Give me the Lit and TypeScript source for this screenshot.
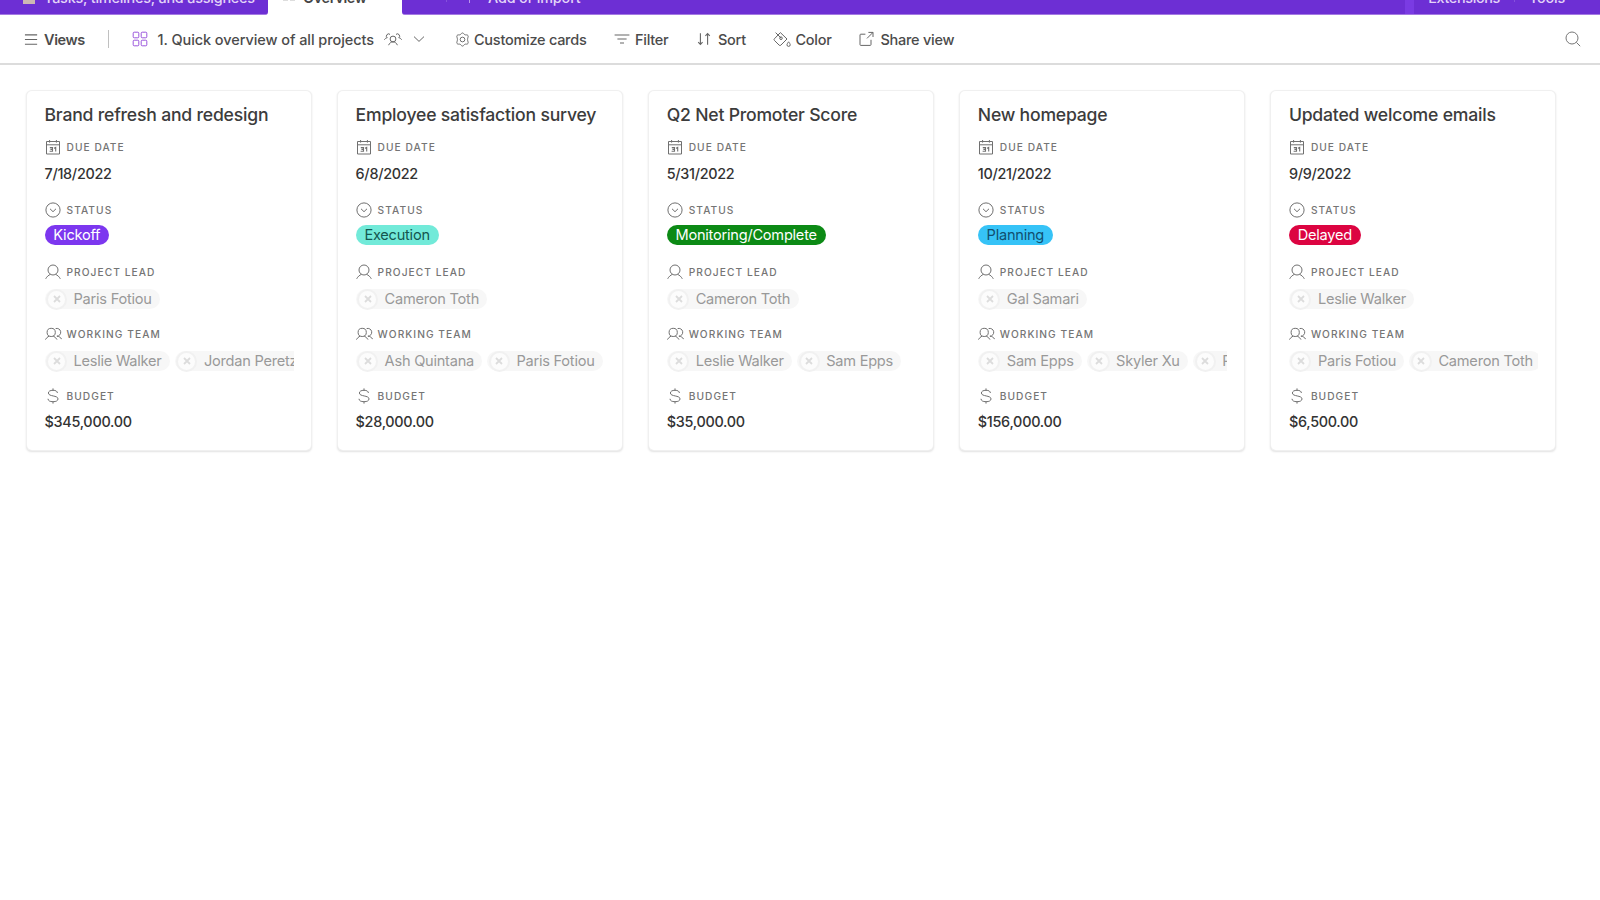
import { LitElement, html, css, svg, nothing } from "lit";
import { customElement, property } from "lit/decorators.js";

const glyphs: Record<string, unknown> = {
  menu: svg`<path d="M1 3H14M1 8H14M1 13H14" stroke-width="1.2"/>`,
  grid: svg`<rect x="1.2" y="1.2" width="5.6" height="5.6" rx="1"/><rect x="9.2" y="1.2" width="5.6" height="5.6" rx="1"/><rect x="1.2" y="9.2" width="5.6" height="5.6" rx="1"/><rect x="9.2" y="9.2" width="5.6" height="5.6" rx="1"/>`,
  people: svg`<circle cx="9" cy="8" r="2.9"/><path d="M4.6 14.2C5.5 12 7 10.9 9 10.9S12.5 12 13.4 14.2M6 3.4A2.2 2.2 0 1 0 3.2 6.8C2 6.9 1.1 7.5.4 8.7M12 3.4A2.2 2.2 0 1 1 14.8 6.8C16 6.9 16.9 7.5 17.6 8.7"/>`,
  chevron: svg`<path d="M3 5.6L8 10.4L13 5.6"/>`,
  gear: svg`<path d="M8 1C9.3 1 9.6 2.6 10.6 3C11.6 3.4 12.9 2.5 13.8 3.7C14.6 4.9 13.4 5.9 13.4 8S14.6 11.1 13.8 12.3C12.9 13.5 11.6 12.6 10.6 13S9.3 15 8 15S6.4 13.4 5.4 13S3.1 13.5 2.2 12.3C1.4 11.1 2.6 10.1 2.6 8S1.4 4.9 2.2 3.7C3.1 2.5 4.4 3.4 5.4 3S6.7 1 8 1Z"/><circle cx="8" cy="8" r="2.5"/>`,
  filter: svg`<path d="M.6 4H15.4M3.4 8H12.6M6 12H10" stroke-width="1.2"/>`,
  sort: svg`<path d="M4.4 2.2V13.4M2.2 11.2L4.4 13.4L6.6 11.2M11.6 13.8V2.6M9.4 4.8L11.6 2.6L13.8 4.8" stroke-width="1.1"/>`,
  paint: svg`<path d="M2.6 1.6L8 7M7.4 1.6L14 8L7.8 14.2Q7 15 6.2 14.2L1.4 9.4Q.6 8.6 1.4 7.8Z" stroke-linejoin="round"/><circle cx="8" cy="7.2" r="1.3"/><path d="M15.6 10.8C16.6 12.2 17.2 13 17.2 13.8A1.6 1.6 0 0 1 14 13.8C14 13 14.6 12.2 15.6 10.8Z"/>`,
  share: svg`<path d="M7.4 3.2H2.8Q2 3.2 2 4V13.6Q2 14.4 2.8 14.4H12.2Q13 14.4 13 13.6V8.8M10.4 1.4H15V6M14.8 1.6L9 7.4" stroke-width="1"/>`,
  search: svg`<circle cx="7" cy="7" r="6"/><path d="M11.4 11.4L15.2 15.2"/>`,
  date: svg`<path d="M1.5 2.5H14.5V15H1.5ZM1.5 5.8H14.5M4.6 1V3.6M11.4 1V3.6"/><path d="M4.8 8.6H7.5V12.3H4.6M5.4 10.4H7.4M9 9.3L10.7 8.4V12.6" stroke-width="1.1"/>`,
  status: svg`<circle cx="8" cy="8" r="7.1"/><path d="M5 6.8L8 9.7L11 6.8"/>`,
  person: svg`<circle cx="8" cy="6" r="5"/><path d="M.7 14.8C1.8 12.6 3.4 11.4 5.4 10.3M10.6 10.3C12.6 11.4 14.2 12.6 15.3 14.8"/>`,
  team: svg`<circle cx="6.2" cy="6.4" r="4.1"/><path d="M.4 13.6C1.2 12 2.6 10.8 4.2 10M8.2 10C9.8 10.8 11.2 12 12 13.6M10.6 2.6A3.9 3.9 0 1 1 11.9 10.2C14.2 10.4 15.7 11.5 16.7 13.2"/>`,
  money: svg`<path d="M8 .4V2.4M8 13.6V15.6M12.4 5C12.4 3.3 10.8 2.3 8 2.3S3.4 3.3 3.4 5C3.4 8.8 13 7.1 13 10.9C13 12.7 11.2 13.7 8 13.7S3 12.7 3 10.8"/>`,
};

const icon = (name: string, w = 16, h = 16, box = "0 0 16 16") =>
  html`<svg width=${w} height=${h} viewBox=${box} fill="none" stroke="currentColor" stroke-width="1">${glyphs[name]}</svg>`;

interface Project {
  title: string;
  due: string;
  status: string;
  tone: string;
  lead: string;
  team: string[];
  budget: string;
}

const projects: Project[] = [
  { title: "Brand refresh and redesign", due: "7/18/2022", status: "Kickoff", tone: "violet", lead: "Paris Fotiou", team: ["Leslie Walker", "Jordan Peretz"], budget: "$345,000.00" },
  { title: "Employee satisfaction survey", due: "6/8/2022", status: "Execution", tone: "teal", lead: "Cameron Toth", team: ["Ash Quintana", "Paris Fotiou"], budget: "$28,000.00" },
  { title: "Q2 Net Promoter Score", due: "5/31/2022", status: "Monitoring/Complete", tone: "green", lead: "Cameron Toth", team: ["Leslie Walker", "Sam Epps"], budget: "$35,000.00" },
  { title: "New homepage", due: "10/21/2022", status: "Planning", tone: "sky", lead: "Gal Samari", team: ["Sam Epps", "Skyler Xu", "Paris Fotiou"], budget: "$156,000.00" },
  { title: "Updated welcome emails", due: "9/9/2022", status: "Delayed", tone: "red", lead: "Leslie Walker", team: ["Paris Fotiou", "Cameron Toth"], budget: "$6,500.00" },
];

@customElement("project-card")
class ProjectCard extends LitElement {
  @property({ attribute: false }) project!: Project;

  static styles = css`
    :host { display: block; box-sizing: border-box; height: 359px; padding: 14px 17px 0 17.5px; border-radius: 5px; background: #fff; box-shadow: 0 0 0 1px #f0f0f0, 0 1px 2px 0.5px #e2e2e2; color: #333; }
    .title { margin: 0; height: 20px; line-height: 20px; font-size: 17.6px; font-weight: 500; letter-spacing: -0.2px; white-space: nowrap; color: #3c3c3c; }
    .fields { padding-top: 14.4px; }
    .field { height: 62.2px; }
    .label { display: flex; align-items: center; gap: 5px; height: 16px; font-size: 10.2px; font-weight: 500; letter-spacing: 1.05px; color: #757575; white-space: nowrap; }
    .slot { display: flex; flex: none; justify-content: center; width: 17px; color: #707070; }
    .value { display: flex; align-items: center; height: 22px; margin-top: 7px; font-size: 14.4px; font-weight: 500; letter-spacing: -0.3px; color: #333; white-space: nowrap; }
    .value.chips { gap: 5px; margin-top: 8.4px; overflow: hidden; }
    .value.state { margin-top: 6.4px; }
    .value.amount { margin-top: 6.3px; letter-spacing: -0.28px; }
    .pill { height: 20px; line-height: 20px; padding: 0 8.8px; border-radius: 10px; font-size: 14.6px; font-weight: 400; letter-spacing: -0.24px; }
    .violet { background: #7c37ef; color: #fff; }
    .teal { background: #72ead9; color: #14564f; }
    .green { background: #0c8a15; color: #fff; }
    .sky { background: #36c3f7; color: #114f70; }
    .red { background: #dc0441; color: #fff; }
    .chip { display: flex; flex: none; align-items: center; height: 20px; padding-right: 8.4px; border-radius: 10px; background: #f7f7f7; color: #999; font-size: 14.6px; font-weight: 400; letter-spacing: -0.24px; }
    .face { display: flex; align-items: center; justify-content: center; box-sizing: border-box; width: 21px; height: 21px; margin: 0 6.5px 0 1.5px; border: 2px solid #f1f1f1; border-radius: 50%; background: #fcfcfc; color: #dcdcdc; }
  `;

  private field(glyph: string, label: string, kind: string, content: unknown) {
    const wide = glyph === "team";
    return html`<div class="field">
      <div class="label"><span class="slot">${wide ? icon(glyph, 17, 16, "0 0 17 16") : icon(glyph)}</span>${label}</div>
      <div class="value ${kind}">${content}</div>
    </div>`;
  }

  private chip(name: string) {
    return html`<span class="chip"><span class="face"><svg width="8" height="8" viewBox="0 0 8 8" stroke="currentColor" stroke-width="1.8"><path d="M1 1L7 7M7 1L1 7"/></svg></span>${name}</span>`;
  }

  render() {
    const p = this.project;
    if (!p) return nothing;
    return html`
      <h2 class="title">${p.title}</h2>
      <div class="fields">
        ${this.field("date", "DUE DATE", "", p.due)}
        ${this.field("status", "STATUS", "state", html`<span class="pill ${p.tone}">${p.status}</span>`)}
        ${this.field("person", "PROJECT LEAD", "chips", this.chip(p.lead))}
        ${this.field("team", "WORKING TEAM", "chips", p.team.map((n) => this.chip(n)))}
        ${this.field("money", "BUDGET", "amount", p.budget)}
      </div>`;
  }
}

@customElement("app-root")
class AppRoot extends LitElement {
  static styles = css`
    :host { display: block; box-sizing: border-box; width: 1600px; height: 900px; overflow: hidden; background: #fff; font-family: Inter, "Liberation Sans", sans-serif; color: #4b4b4b; }
    .tabs { display: flex; height: 15px; overflow: hidden; background: #fff; font-size: 14.4px; font-weight: 500; line-height: 20px; white-space: nowrap; color: #e3d4f8; }
    .tab { display: flex; box-sizing: border-box; height: 15px; background: #6d2fd4; border-bottom: 1px solid #a47ae2; }
    .tab > .text { margin-top: -12px; }
    .first { width: 268px; padding-left: 23px; border-bottom-right-radius: 3px; letter-spacing: -0.2px; }
    .emoji { width: 12px; height: 4px; margin-right: 9px; background: #cdb7b4; }
    .tab.active { width: 134px; padding-left: 15px; border: 0; background: #fff; color: #444; font-weight: 600; letter-spacing: -0.35px; }
    .dots { display: flex; gap: 2px; margin-right: 8px; }
    .dots i { width: 5px; height: 1px; background: #ddd; }
    .rest { flex: 1; border-bottom-left-radius: 3px; letter-spacing: -0.15px; }
    .line { width: 1px; height: 2px; background: #8550dc; }
    .line.a { margin-left: 44px; }
    .line.b { margin-left: 14px; }
    .plus { width: 1px; height: 3px; margin: 0 18px 0 22px; background: #b897ea; }
    .stripe { width: 9px; height: 14px; margin-left: auto; background: #7a3be3; }
    .ext { margin-left: 14px; letter-spacing: -0.35px; }
    .tools { margin: 0 35px 0 14px; letter-spacing: -0.2px; }
    .bar { display: flex; align-items: center; box-sizing: border-box; height: 50px; padding: 0 19px 0 24px; border-bottom: 2px solid #dcdcdc; font-size: 14.5px; font-weight: 500; letter-spacing: -0.26px; white-space: nowrap; }
    .item { display: flex; align-items: center; box-sizing: border-box; flex: none; }
    .views { width: 84px; gap: 5px; font-weight: 600; letter-spacing: -0.4px; }
    .sep { width: 1px; height: 18px; margin-right: 23px; background: #c0c0c0; }
    .title { width: 322.5px; letter-spacing: -0.07px; }
    .purple { display: flex; margin-right: 9.5px; color: #9a55dc; }
    .crowd { display: flex; margin: 0 9.5px 0 10px; }
    .custom { width: 159.5px; gap: 4.5px; }
    .filter { width: 82px; gap: 5px; }
    .sort { width: 77px; gap: 6px; }
    .color { width: 84.5px; gap: 4.5px; }
    .share { gap: 7px; }
    .item svg { color: #666; }
    .item .purple svg { color: #9a55dc; }
    .search { display: flex; margin-left: auto; color: #777; }
    .gallery { display: grid; grid-template-columns: repeat(5, 284px); column-gap: 27.1px; padding: 26px 0 0 27px; }
  `;

  render() {
    return html`
      <nav class="tabs">
        <div class="tab first"><span class="emoji"></span><span class="text">Tasks, timelines, and assignees</span></div>
        <div class="tab active"><span class="dots"><i></i><i></i></span><span class="text">Overview</span></div>
        <div class="tab rest"><span class="line a"></span><span class="plus"></span><span class="text">Add or import</span><span class="stripe"></span><span class="text ext">Extensions</span><span class="line b"></span><span class="text tools">Tools</span></div>
      </nav>
      <div class="bar">
        <div class="item views">${icon("menu", 15, 15)}Views</div>
        <span class="sep"></span>
        <div class="item title"><span class="purple">${icon("grid")}</span>1. Quick overview of all projects<span class="crowd">${icon("people", 18, 16, "0 0 18 16")}</span>${icon("chevron")}</div>
        <div class="item custom">${icon("gear", 15, 15)}Customize cards</div>
        <div class="item filter">${icon("filter")}Filter</div>
        <div class="item sort">${icon("sort")}Sort</div>
        <div class="item color">${icon("paint", 18, 16, "0 0 18 16")}Color</div>
        <div class="item share">${icon("share")}Share view</div>
        <span class="search">${icon("search")}</span>
      </div>
      <main class="gallery">${projects.map((p) => html`<project-card .project=${p}></project-card>`)}</main>`;
  }
}
